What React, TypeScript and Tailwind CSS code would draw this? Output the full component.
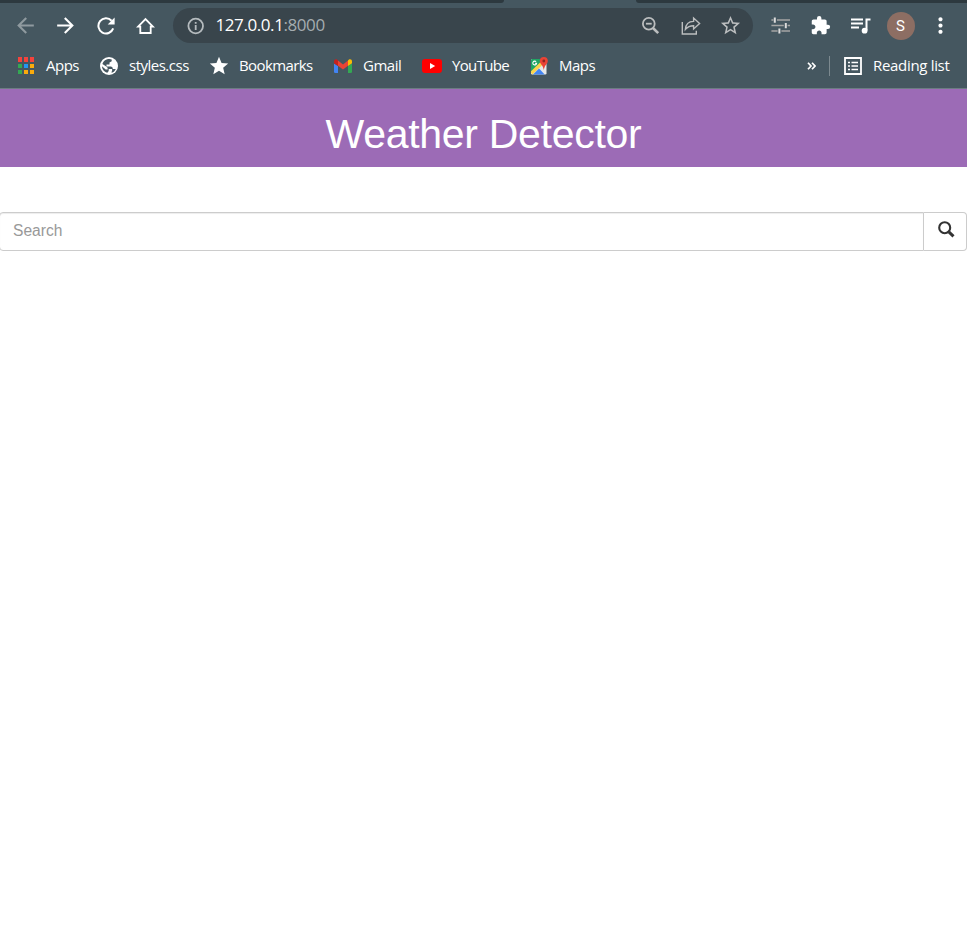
import type { ReactNode } from "react";
import { MdArrowBack, MdArrowForward, MdExtension, MdMoreVert, MdStar, MdStarBorder } from "react-icons/md";

function Slot({ children, className = "" }: { children: ReactNode; className?: string }) {
  return <div className={`flex h-6 w-10 shrink-0 items-center justify-center ${className}`}>{children}</div>;
}

function RefreshIcon() {
  return (
    <svg width="18" height="18" viewBox="0 0 18 18" fill="none">
      <path d="M14.6 3.7A7.6 7.6 0 1 0 16.2 11.4" stroke="#fff" strokeWidth="2" />
      <path d="M17.6.6v6.9h-6.9z" fill="#fff" />
    </svg>
  );
}

function HomeIcon() {
  return (
    <svg width="19" height="18" viewBox="0 0 19 18" fill="none" stroke="white" strokeWidth="1.8">
      <path d="M2.1 9.6 9.5 2l7.4 7.6h-2.2V16H4.3V9.6z" />
    </svg>
  );
}

function InfoIcon() {
  return (
    <svg width="18" height="18" viewBox="0 0 18 18" fill="none" stroke="#b5bbbe" strokeWidth="1.8">
      <circle cx="8.7" cy="9" r="7.3" />
      <path d="M8.7 8v5M8.7 5v1.8" />
    </svg>
  );
}

function ZoomOutIcon() {
  return (
    <svg width="20" height="20" viewBox="0 0 20 20" fill="none" stroke="#bcbebf" strokeWidth="1.8">
      <circle cx="7.8" cy="7.7" r="5.9" />
      <path d="M4.9 7.7h5.8" />
      <path d="m12 12 5.2 5.2" strokeWidth="2.6" />
    </svg>
  );
}

function ShareIcon() {
  return (
    <svg width="20" height="20" viewBox="0 0 20 20" fill="none" stroke="#bcbebf" strokeWidth="1.4">
      <path d="M1.3 6v12h14v-3.2" />
      <path d="M4.4 13.4c.4-5.3 3.1-8 8.2-8V2l6 5.6-6 5.4V9.7c-3.6 0-6.1 1.1-8.2 3.7z" />
    </svg>
  );
}

function TuneIcon() {
  return (
    <svg width="20" height="18" viewBox="0 0 20 18" fill="none">
      <path d="M.4 3h2M6 3h13M.4 8.5h12.4M16.6 8.5H19M.4 14h6.2M10.4 14H19" stroke="#a5a5a4" strokeWidth="1.7" />
      <path d="M3.8.5v5.2M14.8 6v5.2M8.4 11.4v5.2" stroke="#dcdcdc" strokeWidth="2" />
    </svg>
  );
}

function QueueIcon() {
  return (
    <svg width="20" height="18" viewBox="0 0 20 18" fill="none" stroke="#fff">
      <path d="M0 2.5h12M0 6.5h12M0 10.5h8" strokeWidth="1.8" />
      <path d="M15.5 13.5V2.5h4" strokeWidth="2" />
      <circle cx="13.6" cy="13.7" r="2.9" fill="#fff" stroke="none" />
    </svg>
  );
}

function GlobeIcon() {
  return (
    <svg width="18" height="18" viewBox="0 0 18 18">
      <circle cx="9" cy="9" r="9" fill="#fff" />
      <path fill="#455760" d="M7.2 2.3c2-.6 3.5-.3 4.5.2v1.7L9.5 5.5v2h-3v2h4.2c1.4.3 2.2 1.1 2.1 2.5h3c-.9 2-2.2 3.3-4 3.8l-1.1-2-1.9 2.1C4.5 15.5 2.1 12.7 2 9.2l3.7 3.4h1.9v-1.9L5.5 9 2.4 7.1C3 4.8 4.7 3 7.2 2.3z" />
      <path fill="#fff" d="M8.7 12h3.4v2l-1.6 2H7.2l1.5-2z" />
    </svg>
  );
}

function AppsIcon() {
  return (
    <svg width="18" height="18" viewBox="0 0 18 18" shapeRendering="crispEdges">
      <path fill="#f4433c" d="M1 0h4v5H1zM7 0h4v5H7zM13 0h4v5h-4z" />
      <path fill="#34a853" d="M1 7h4v4H1zM1 13h4v4H1z" />
      <path fill="#2196f3" d="M7 7h4v4H7z" />
      <path fill="#f9ab0c" d="M13 7h4v4h-4zM7 13h4v4H7zM13 13h4v4h-4z" />
    </svg>
  );
}

function GmailIcon() {
  return (
    <svg width="18" height="14" viewBox="0 0 18 14">
      <path fill="#4285f4" d="M0 4.5 4 7v7H1.2A1.2 1.2 0 0 1 0 12.8z" />
      <path fill="#34a853" d="M18 4.5 14 7v7h2.8a1.2 1.2 0 0 0 1.2-1.2z" />
      <path fill="#ea4335" d="m4 1.6 5 3.8 5-3.8v5.2l-5 3.8-5-3.8z" />
      <path fill="#c5221f" d="M0 2.4C0 .4 1.9-.2 3.3.8L4 1.4V7L0 4.2z" />
      <path fill="#fbbc04" d="M18 2.4c0-2-1.9-2.6-3.3-1.6l-.7.6V7l4-2.8z" />
    </svg>
  );
}

function YouTubeIcon() {
  return (
    <svg width="20" height="14" viewBox="0 0 20 14">
      <rect width="20" height="14" rx="3" fill="#f00" />
      <path fill="#fff" d="m8 4 5.2 3L8 10z" />
    </svg>
  );
}

function MapsIcon() {
  return (
    <svg width="18" height="18" viewBox="0 0 18 18">
      <rect x="1" y="2" width="15.5" height="15.5" rx="1.3" fill="#e7e9e9" />
      <path fill="#1fa463" d="M2.3 2H12v4.8L1 16V3.3A1.3 1.3 0 0 1 2.3 2z" />
      <path fill="#fbd34c" d="M1 14.3 10.6 5l2.2 2.4L2.5 17.5 1 16z" />
      <path fill="#4285f4" d="m3 17.5 6-6 5.7 6z" />
      <path fill="none" stroke="#fff" strokeWidth="1.1" d="M6.1 4.7A1.9 1.9 0 1 0 6.6 6.3H5" />
      <path fill="#ea4335" d="M13.8 0a4 4 0 0 1 4 4c0 3.2-3.2 3.6-4 9-.8-5.4-4-5.8-4-9a4 4 0 0 1 4-4z" />
      <circle cx="13.8" cy="4" r="1.4" fill="#8f251e" />
    </svg>
  );
}

function ReadingIcon() {
  return (
    <svg width="18" height="18" viewBox="0 0 18 18" fill="none" stroke="#fff">
      <path strokeWidth="1.8" d="M1 1h16v16H1z" />
      <path strokeWidth="1.5" d="M4 5.5h2M7.5 5.5H14M4 9h2M7.5 9H14M4 12.5h2M7.5 12.5H14" />
    </svg>
  );
}

function Bookmark({ icon, label, className }: { icon: ReactNode; label: string; className: string }) {
  return (
    <div className={`flex h-6 shrink-0 items-center gap-[10px] whitespace-nowrap ${className}`}>
      <span className="flex w-5 shrink-0 justify-center">{icon}</span>
      <span className="pb-[2px]">{label}</span>
    </div>
  );
}

function BrowserChrome() {
  return (
    <header className="h-[89px] border-b border-[#6c7c83] bg-[#455760] font-['Open_Sans',sans-serif] text-white">
      <div className="flex h-[3px] justify-between">
        <div className="w-[504px] rounded-br-[4px] bg-[#2d393f]" />
        <div className="w-[331px] rounded-bl-[4px] bg-[#2d393f]" />
      </div>
      <nav className="flex h-[45px] items-center pl-[5.5px]">
        <Slot><MdArrowBack size={25} color="#8f9a9f" /></Slot>
        <Slot><MdArrowForward size={25} /></Slot>
        <Slot><RefreshIcon /></Slot>
        <Slot><HomeIcon /></Slot>
        <div className="ml-[7.5px] flex h-[35px] w-[580px] items-center rounded-full bg-[#39454c] pl-[13.5px] pr-[2.5px]">
          <InfoIcon />
          <span className="ml-[11px] pb-px text-[17px] tracking-[-0.42px]">127.0.0.1<span className="text-[#a5acb0]">:8000</span></span>
          <div className="ml-auto flex">
            <Slot><ZoomOutIcon /></Slot>
            <Slot><ShareIcon /></Slot>
            <Slot><MdStarBorder size={23} color="#bcbebf" /></Slot>
          </div>
        </div>
        <Slot className="ml-[7.5px]"><TuneIcon /></Slot>
        <Slot><MdExtension size={21} /></Slot>
        <Slot><QueueIcon /></Slot>
        <Slot><span className="flex size-7 items-center justify-center rounded-full bg-[#8d6e63] pt-px font-[Roboto] text-[15px]">S</span></Slot>
        <Slot><MdMoreVert size={25} /></Slot>
      </nav>
      <nav className="flex h-9 items-center pl-4 text-[15px] tracking-[-0.5px]">
        <Bookmark icon={<AppsIcon />} label="Apps" className="w-[83px]" />
        <Bookmark icon={<GlobeIcon />} label="styles.css" className="w-[110px]" />
        <Bookmark icon={<MdStar size={22} className="shrink-0" />} label="Bookmarks" className="w-[124px] tracking-[-0.6px]" />
        <Bookmark icon={<GmailIcon />} label="Gmail" className="w-[89px]" />
        <Bookmark icon={<YouTubeIcon />} label="YouTube" className="w-[107px] tracking-[-0.65px]" />
        <Bookmark icon={<MapsIcon />} label="Maps" className="" />
        <div className="ml-auto flex items-center">
          <svg width="9" height="8" viewBox="0 0 9 8" fill="none" stroke="white" strokeWidth="1.7"><path d="m1 .7 3 3.3-3 3.3M5 .7 8 4 5 7.3" /></svg>
          <div className="ml-[13px] h-5 w-px bg-[#7c898f]" />
          <Bookmark icon={<ReadingIcon />} label="Reading list" className="ml-[13px] w-[124px] tracking-[-0.32px]" />
        </div>
      </nav>
    </header>
  );
}

export default function App() {
  return (
    <div className="min-h-[941px] w-full overflow-hidden bg-white font-['Liberation_Sans',Arial,sans-serif]">
      <BrowserChrome />
      <h1 className="flex h-[78px] items-center justify-center bg-[#9c6bb6] pt-3 text-[41px] leading-none tracking-[-0.3px] text-white">Weather Detector</h1>
      <form className="-ml-px mt-[45px] flex h-[39px]" onSubmit={(event) => event.preventDefault()}>
        <input
          type="text"
          placeholder="Search"
          className="h-full w-[925px] rounded-l-[4px] border border-[#ccc] px-[13px] pb-[2px] text-[15.6px] shadow-[inset_0_1px_1px_rgba(0,0,0,0.075)] outline-none placeholder:text-[#999]"
        />
        <button type="submit" aria-label="Search" className="flex h-full flex-1 items-center justify-center rounded-r-[4px] border border-l-0 border-[#ccc] pb-1 pl-[3px]">
          <svg width="17" height="17" viewBox="0 0 17 17" fill="none" stroke="#333">
            <circle cx="6.7" cy="6.7" r="5.5" strokeWidth="2.1" />
            <path d="m10.8 10.8 4.7 4.5" strokeWidth="3" />
          </svg>
        </button>
      </form>
    </div>
  );
}
